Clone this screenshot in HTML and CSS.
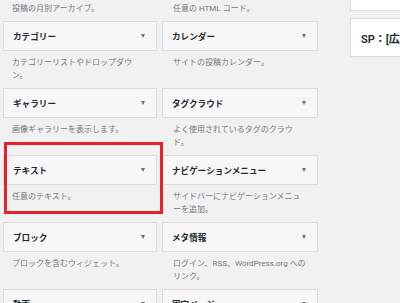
FILE: index.html
```html
<!DOCTYPE html>
<html lang="ja">

<head>
    <meta charset="UTF-8">
    <meta name="viewport" content="width=device-width, initial-scale=1.0">
    <title>ウィジェット</title>
    <link rel="stylesheet" href="styles.css">
</head>

<body>
    <div class="page">
        <div class="widget-list">
            <div class="widget">
                <div class="widget-top"><h3 class="widget-title">アーカイブ</h3><span class="arrow"></span></div>
                <p class="widget-desc">投稿の月別アーカイブ。</p>
            </div>
            <div class="widget">
                <div class="widget-top"><h3 class="widget-title">カスタム HTML</h3><span class="arrow"></span></div>
                <p class="widget-desc">任意の HTML コード。</p>
            </div>
            <div class="widget">
                <div class="widget-top"><h3 class="widget-title">カテゴリー</h3><span class="arrow"></span></div>
                <p class="widget-desc">カテゴリーリストやドロップダウン。</p>
            </div>
            <div class="widget">
                <div class="widget-top"><h3 class="widget-title">カレンダー</h3><span class="arrow"></span></div>
                <p class="widget-desc">サイトの投稿カレンダー。</p>
            </div>
            <div class="widget">
                <div class="widget-top"><h3 class="widget-title">ギャラリー</h3><span class="arrow"></span></div>
                <p class="widget-desc">画像ギャラリーを表示します。</p>
            </div>
            <div class="widget">
                <div class="widget-top"><h3 class="widget-title">タグクラウド</h3><span class="arrow"></span></div>
                <p class="widget-desc">よく使用されているタグのクラウド。</p>
            </div>
            <div class="widget">
                <div class="widget-top"><h3 class="widget-title">テキスト</h3><span class="arrow"></span></div>
                <p class="widget-desc">任意のテキスト。</p>
            </div>
            <div class="widget">
                <div class="widget-top"><h3 class="widget-title">ナビゲーションメニュー</h3><span class="arrow"></span></div>
                <p class="widget-desc">サイドバーにナビゲーションメニューを追加。</p>
            </div>
            <div class="widget">
                <div class="widget-top"><h3 class="widget-title">ブロック</h3><span class="arrow"></span></div>
                <p class="widget-desc">ブロックを含むウィジェット。</p>
            </div>
            <div class="widget">
                <div class="widget-top"><h3 class="widget-title">メタ情報</h3><span class="arrow"></span></div>
                <p class="widget-desc">ログイン、RSS、WordPress.org へのリンク。</p>
            </div>
            <div class="widget">
                <div class="widget-top"><h3 class="widget-title">動画</h3><span class="arrow"></span></div>
                <p class="widget-desc">メディアライブラリから動画を表示します。</p>
            </div>
            <div class="widget">
                <div class="widget-top"><h3 class="widget-title">固定ページ</h3><span class="arrow"></span></div>
                <p class="widget-desc">固定ページのリスト。</p>
            </div>
        </div>

        <div class="sidebars">
            <div class="sidebar-box"></div>
            <div class="sidebar-box">
                <h2 class="sidebar-name">SP：[広告] 記事下</h2>
            </div>
        </div>

        <!-- annotation frame -->
        <div class="highlight"></div>
    </div>
</body>

</html>
```

FILE: styles.css
```css
body {
    margin: 0;
    background-color: #f1f1f1;
    font-family: Roboto, "Noto Sans CJK JP", sans-serif;
    color: #23282d;
    overflow: hidden;
}

.page {
    display: flex;
    align-items: flex-start;
    position: relative; /* context for the red frame */
    height: 303px;
    overflow: hidden;
}

.widget-list {
    display: grid;
    grid-template-columns: 154px 156px;
    column-gap: 5px;
    margin-top: -33px;
    padding-left: 3px;
    flex-shrink: 0;
}

.widget-top {
    display: flex;
    justify-content: space-between;
    align-items: center;
    box-sizing: border-box;
    height: 30px;
    padding: 0 11px 0 9px;
    background-color: #f7f7f7;
    border: 1px solid #dcdcdc;
}

.widget-title {
    margin: 0;
    font-size: 8.6px;
    font-weight: bold;
    white-space: nowrap;
}

.arrow {
    width: 0;
    height: 0;
    border-left: 2.5px solid transparent;
    border-right: 2.5px solid transparent;
    border-top: 4px solid #6d7176;
}

.widget-desc {
    margin: 5px 0 6px;
    padding: 0 9px;
    width: 135px;
    font-size: 8px;
    line-height: 13px;
    color: #72777c;
}

.widget:nth-child(even) .widget-desc {
    padding-left: 11px;
}

.sidebars {
    display: flex;
    flex-direction: column;
    gap: 7px;
    margin-left: 32px;
    margin-top: -30px;
    flex-shrink: 0;
}

.sidebar-box {
    box-sizing: border-box;
    width: 240px;
    height: 41px;
    background-color: #fff;
    border: 1px solid #dcdcdc;
}

.sidebar-box + .sidebar-box {
    height: 39px;
    display: flex;
    align-items: center;
    padding-left: 10px;
}

.sidebar-name {
    margin: 0;
    font-size: 11px;
    font-weight: 600;
    white-space: nowrap;
}

.highlight {
    position: absolute;
    left: 4px;
    top: 142px;
    width: 153px;
    height: 66px;
    border: 3px solid #e8202a;
}
```
